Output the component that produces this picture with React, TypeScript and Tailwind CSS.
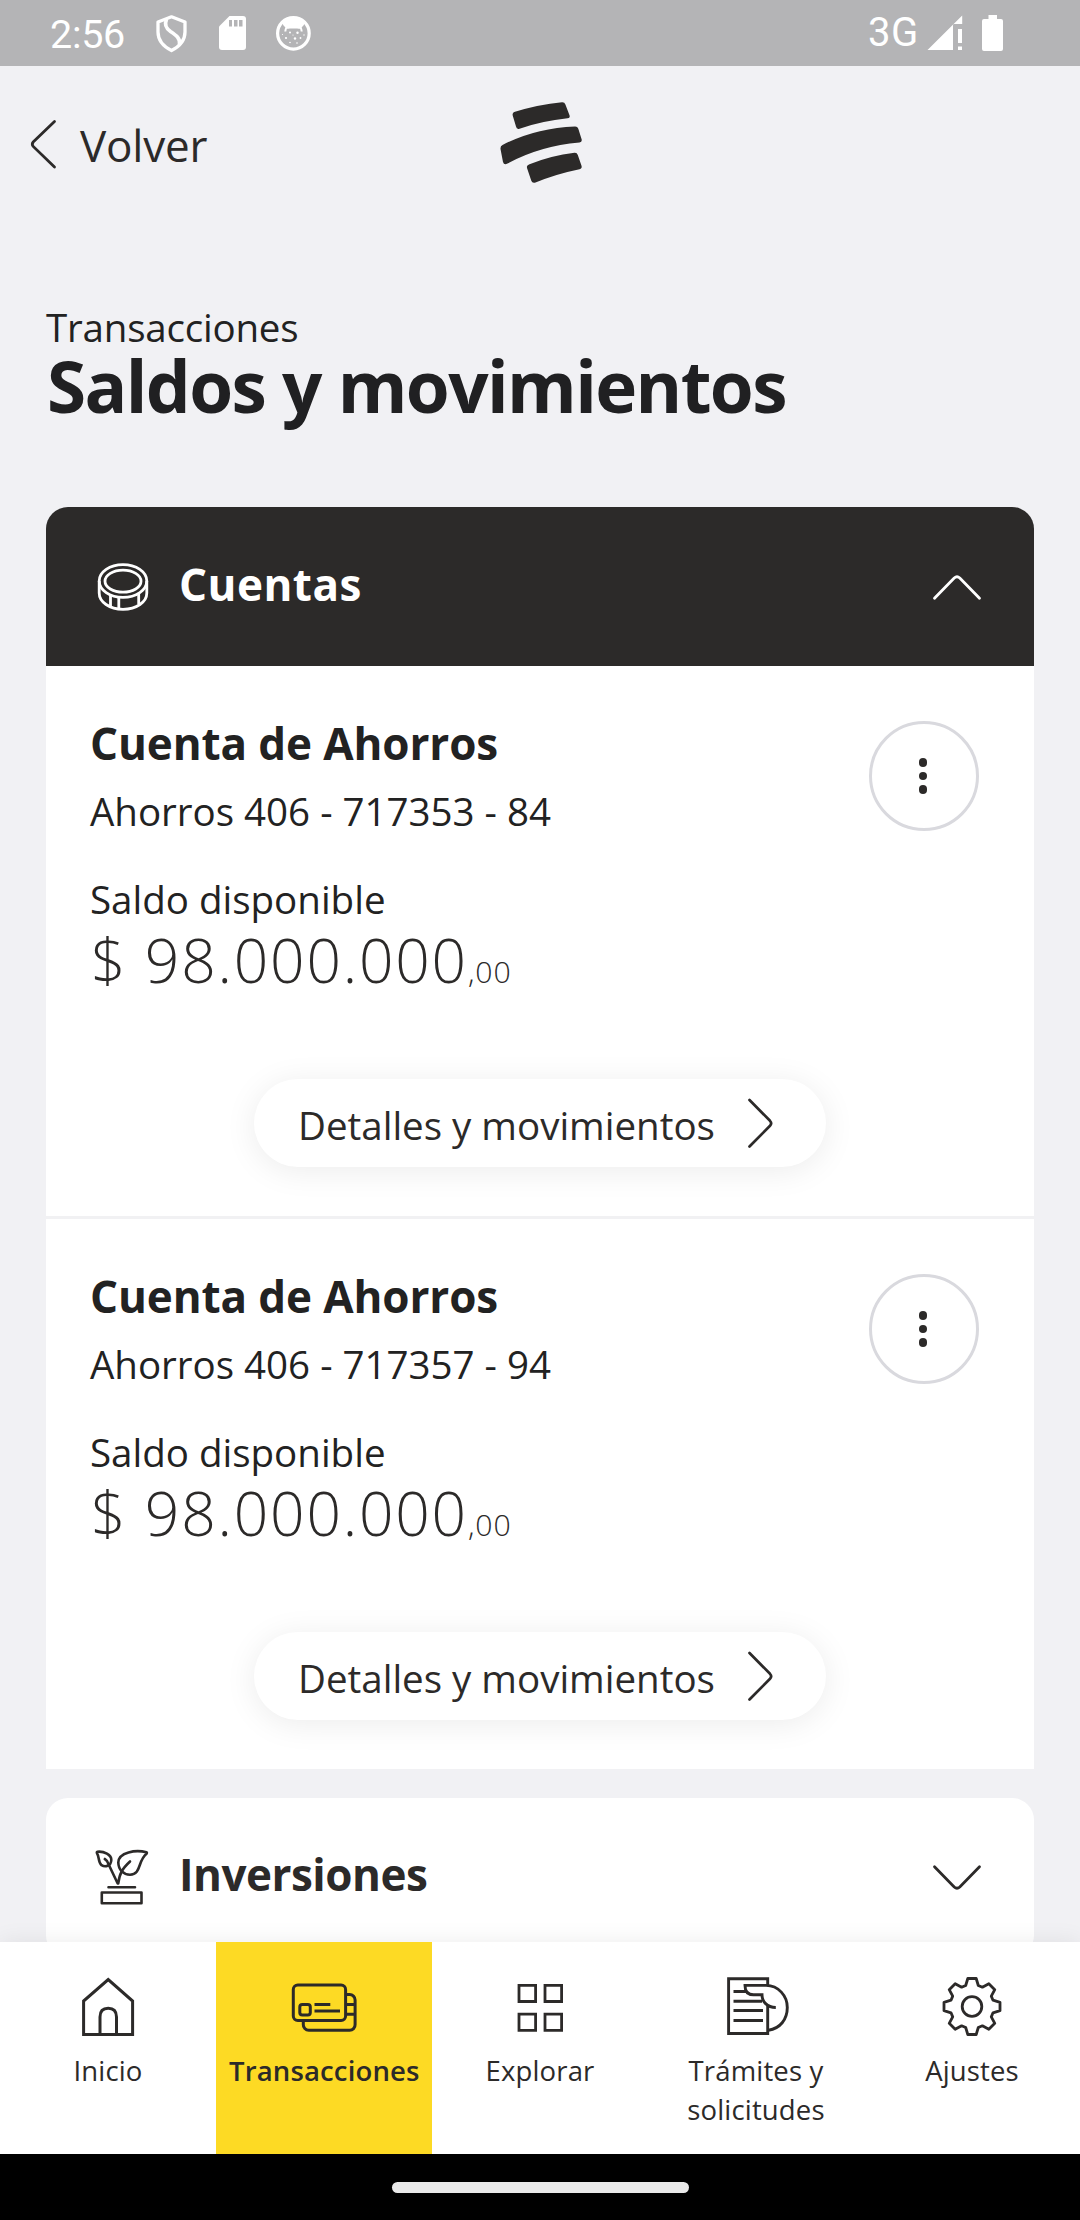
import type { ReactNode } from "react";

const INK = "#2c2a29";

function StatusBar() {
  return (
    <div className="flex h-[66px] shrink-0 items-start bg-[#b4b4b6] text-white">
      <span className="ml-[50px] mt-[11px] w-[76px] font-[Roboto,sans-serif] text-[39.5px] leading-[48px] tracking-[-0.3px]">
        2:56
      </span>
      <svg className="ml-[28px] mt-[12px] h-[42px] w-[34px]" viewBox="154 12 34 42" fill="none" stroke="white" strokeWidth="3.3">
        <path d="M171.5 16.8 L185 22 V32 C185 40 179.5 46.5 171.5 50.5 C163.5 46.500 158 40 158 32 V22 Z" strokeLinejoin="round" />
        <path d="M166.500 19.500 C164.500 24 165.500 28 170.500 31.500 C176.500 35.500 180.500 38.500 179.500 44.500" strokeWidth="3.600" />
      </svg>
      <svg className="ml-[31px] mt-4 h-[35px] w-[27px]" viewBox="219 16 27 35">
        <path d="M229.5 16 H243 A3 3 0 0 1 246 19 V47 A3 3 0 0 1 243 50 H222 A3 3 0 0 1 219 47 V26.5 Z" fill="white" />
        <path d="M229 20 H232 V26.5 H229 Z M234 20 H237.500 V26.500 H234 Z M239 20 H242.500 V26.500 H239 Z" fill="#b4b4b6" />
      </svg>
      <svg className="ml-[29px] mt-[15px] h-[37px] w-[37px]" viewBox="275 15 37 37">
        <circle cx="293.4" cy="33.3" r="15.8" fill="none" stroke="white" strokeWidth="3.2" />
        <path d="M281.500 21.500 C287 16.500 300 16.500 305.300 21.500 L303.500 25.500 L300 28.800 C297 28.300 290 28.300 287 28.800 L283.500 25.500 Z" fill="white" />
        <path d="M283.500 22 L286.500 27.500 Q285.500 29 285.300 31.500 M303.500 22 L300.500 27.500 Q301.500 29 301.700 31.500" fill="none" stroke="white" strokeWidth="2" />
        <g fill="white">
          <circle cx="290" cy="32.500" r="1" /><circle cx="297.500" cy="32.800" r="1.200" />
          <circle cx="286" cy="38" r="1.100" /><circle cx="295" cy="38.500" r="1.200" />
          <circle cx="300.500" cy="38" r="0.900" /><circle cx="290" cy="42.500" r="0.800" />
          <circle cx="297" cy="43" r="0.800" /><circle cx="293" cy="35" r="0.600" />
          <circle cx="304" cy="35" r="0.700" /><circle cx="282.500" cy="34.500" r="0.600" />
        </g>
      </svg>
      <span className="ml-auto mt-[9px] w-[50px] font-[Roboto,sans-serif] text-[40px] leading-[48px] tracking-[0.500px]">
        3G
      </span>
      <svg className="ml-[9px] mt-[15px] h-9 w-[36px]" viewBox="927 15 36 36" fill="white">
        <path d="M927.5 50 L962.200 15.500 V24 H953 V50 Z" />
        <path d="M958 29 H962 V43 H958 Z M958 46.500 H962 V50 H958 Z" />
      </svg>
      <svg className="ml-[18px] mr-[76px] mt-[15px] h-9 w-[23px]" viewBox="981 15 23 36" fill="white">
        <path d="M988.500 15 H997 V19 H1001 A2 2 0 0 1 1003 21 V49 A2 2 0 0 1 1001 51 H984 A2 2 0 0 1 982 49 V21 A2 2 0 0 1 984 19 H988.500 Z" />
      </svg>
    </div>
  );
}

function Header() {
  return (
    <header className="grid h-[158px] shrink-0 grid-cols-3 items-center text-[#2c2a29]">
      <button className="flex items-center text-left">
        <svg className="mb-[3px] ml-7 h-[52px] w-8" viewBox="28 117 32 52" fill="none" stroke={INK} strokeWidth="2.8" strokeLinecap="round">
          <path d="M54.5 120.500 L33.200 141 Q31.400 143.200 33.200 145.400 L54.500 166" />
        </svg>
        <span className="ml-5 text-[44px] leading-[60px] tracking-[-0.2px]">Volver</span>
      </button>
      <svg className="h-[90px] w-[86px] justify-self-center" viewBox="497 100 86 90" fill={INK}>
        <path d="M515 111.800 Q538 104.500 562 102.200 Q564.600 102 565.400 104.500 L569.600 115.500 Q570.300 118 567.500 118.300 Q542 121 519.500 128.700 Q516.600 129.600 516 126.500 L512.700 115.500 Q512 112.700 515 111.800 Z" />
        <path d="M502.500 145 Q535 128 575 126.400 Q577.500 126.300 578.300 128.700 L581.700 139.500 Q582.200 142.300 579.500 142.600 Q540 146 507.500 163.600 Q504 165.500 503 162 L500.600 149.500 Q500 146.200 502.500 145 Z" />
        <path d="M529.500 164.200 Q551 155.500 574.500 152.700 Q577 152.400 577.800 155 L581.600 166 Q582.200 168.600 579.500 169.200 Q556 174 535.500 182.500 Q532.300 183.700 531.300 180.700 L527 168 Q526.300 165.400 529.500 164.200 Z" />
      </svg>
    </header>
  );
}

function CoinIcon() {
  return (
    <svg className="h-[54px] w-[54px]" viewBox="96 560 54 54" fill="none" stroke="white" strokeWidth="2.800">
      <ellipse cx="123" cy="581" rx="23.800" ry="16.400" />
      <ellipse cx="123" cy="581.200" rx="18" ry="11" />
      <path d="M99.200 581 V593 C99.200 602 109.500 609.300 123 609.300 S146.800 602 146.800 593 V581" />
      <path d="M110.500 596 V606 M118.800 598 V608.500 M138.700 594 V604" />
    </svg>
  );
}

function PlantIcon() {
  return (
    <svg className="h-[60px] w-[56px]" viewBox="94 1850 56 60" fill="none" stroke={INK} strokeWidth="2.600" strokeLinecap="round" strokeLinejoin="round">
      <path d="M101.800 1894.500 H141.500 V1905.300 H101.800 Z M108.500 1889.300 H135" />
      <path d="M104.800 1861 L107 1863 L117.700 1885.500 M130 1863.500 C122 1871 119.500 1875.500 118.200 1885.500" />
      <path d="M97.500 1853.700 C104 1853 111.500 1857 111.300 1862 C111 1868.500 105 1869.300 101.500 1867.200 C98 1864.500 99.500 1859 97 1855.200 Q96.500 1854 97.500 1853.700 Z" />
      <path d="M146.500 1854.300 C136 1851.500 118.500 1854 118.300 1864.500 C118.500 1872 123.500 1876.700 130 1876.700 C141.500 1876.500 137.500 1863 146.500 1855.800 Q147.300 1854.600 146.500 1854.300 Z" />
    </svg>
  );
}

function Chevron({ className, color }: { className: string; color: string }) {
  return (
    <svg className={className} viewBox="0 0 50 28" fill="none" stroke={color} strokeWidth="2.800" strokeLinecap="round">
      <path d="M2.500 25.300 L22.200 5 Q25 2.600 27.800 5 L47.500 25.300" />
    </svg>
  );
}

function AccountItem({ number, divider }: { number: string; divider?: boolean }) {
  return (
    <article className={divider ? "h-[553px] border-b-[3px] border-[#f1f1f3] bg-white pt-[53px]" : "h-[550px] bg-white pt-[53px]"}>
      <div className="flex h-[360px] items-start justify-between pl-11 pr-[55px]">
        <div className="whitespace-nowrap">
          <h3 className="text-[44px] leading-[48px] font-bold tracking-[-0.1px] text-[#222]">Cuenta de Ahorros</h3>
          <p className="mt-5 text-[38.5px] leading-[48px]">{number}</p>
          <p className="mt-10 text-[38.5px] leading-[48px]">Saldo disponible</p>
          <p className="mt-[5px] ml-px text-[60.5px] leading-[64px] font-[340] tracking-[1.800px] text-[#2c2a29]">
            $ 98.000.000<span className="text-[30.25px] tracking-[0.900px]">,00</span>
          </p>
        </div>
        <button className="mt-[2px] flex size-[110px] flex-col items-center justify-center gap-[5px] rounded-full border-[3px] border-[#d9d9de] pr-0.5">
          <span className="size-[8.700px] rounded-full bg-[#2c2a29]" />
          <span className="size-[8.700px] rounded-full bg-[#2c2a29]" />
          <span className="size-[8.700px] rounded-full bg-[#2c2a29]" />
        </button>
      </div>
      <button className="mx-auto flex h-[88px] w-[572px] items-center rounded-full bg-white pl-11 text-[#2c2a29] shadow-[0_4px_32px_rgba(0,0,0,0.080)]">
        <span className="mt-[3px] w-[416px] text-left text-[38.5px] leading-[48px] whitespace-nowrap">Detalles y movimientos</span>
        <svg className="ml-8 h-[52px] w-[28px]" viewBox="746 1097 28 52" fill="none" stroke={INK} strokeWidth="2.700" strokeLinecap="round">
          <path d="M749.500 1100 L770 1120.800 Q772.300 1123.300 770 1125.800 L749.500 1146.500" />
        </svg>
      </button>
    </article>
  );
}

function HomeIcon() {
  return (
    <svg className="h-[60px] w-[70px]" viewBox="73 1977 70 60" fill="none" stroke={INK} strokeWidth="3">
      <path d="M83.600 2034.500 V2001 L108.200 1979.500 L132.600 2001 V2034.500 Z" />
      <path d="M100 2034 V2017 Q100 2008.300 108.200 2008.300 T116.500 2017 V2034" />
    </svg>
  );
}

function CardsIcon() {
  return (
    <svg className="h-[60px] w-[70px]" viewBox="289.5 1977 70 60" fill="none" stroke={INK} strokeWidth="3">
      <rect x="293.800" y="1985" width="52.300" height="35.500" rx="4.500" />
      <rect x="300.300" y="2004.500" width="10.500" height="10.500" rx="2.500" />
      <path d="M315 2004.500 H330.800 M315 2011 H340.500" />
      <path d="M303.800 2021 V2024.500 A5.500 5.500 0 0 0 309.300 2030.300 H350 A5.500 5.500 0 0 0 355.600 2024.500 V2000 A5.500 5.500 0 0 0 350 1994.500 H346 M346 2004.500 H355.600 M346 2014.300 H355.600" />
    </svg>
  );
}

function GridIcon() {
  return (
    <svg className="h-[60px] w-[70px]" viewBox="505 1977 70 60" fill="none" stroke={INK} strokeWidth="2.800">
      <path d="M519 1985.300 H535.600 V2001.500 H519 Z M545 1985.300 H561.600 V2001.500 H545 Z M519 2014.200 H535.600 V2030.400 H519 Z M545 2014.200 H561.600 V2030.400 H545 Z" />
    </svg>
  );
}

function PaperIcon() {
  return (
    <svg className="h-[60px] w-[70px]" viewBox="721 1977 70 60" fill="none" stroke={INK} strokeWidth="2.900">
      <path d="M767.700 1985.500 V1978.800 H728.600 V2033.500 H767.700 V2006" />
      <path d="M733.500 1991.500 H746 M733.500 2001.300 H762 M733.500 2010.500 H763 M733.500 2020.500 H763" />
      <path d="M768.500 2030.200 C780 2028.500 787.300 2019.500 787.300 2007.500 C787.300 1996 778.500 1985.400 766 1985.400 H745 C745 1991.500 748 1994.700 753.500 1994.700 H762 C762 2001.500 767 2007.500 775.800 2007.500" />
    </svg>
  );
}

const GEAR_POINTS = Array.from({ length: 8 }, (_, i) => (i * Math.PI) / 4)
  .flatMap((a) =>
    [[-6.300, -21], [-4.200, -28], [4.200, -28], [6.300, -21]].map(
      ([x, y]) => `${(x * Math.cos(a) - y * Math.sin(a)).toFixed(2)},${(x * Math.sin(a) + y * Math.cos(a)).toFixed(2)}`,
    ),
  )
  .join(" ");

function GearIcon() {
  return (
    <svg className="h-[60px] w-[70px]" viewBox="-35 -29.5 70 60" fill="none" stroke={INK} strokeWidth="2.800" strokeLinejoin="round">
      <polygon points={GEAR_POINTS} />
      <circle r="9.800" />
    </svg>
  );
}

function NavItem({ icon, label, active }: { icon: ReactNode; label: string; active?: boolean }) {
  return (
    <button className={active ? "flex flex-col items-center bg-[#fdda24] pt-[35px] font-semibold" : "flex flex-col items-center pt-[35px]"}>
      {icon}
      <span className="mt-3.5 w-[190px] text-center text-[27.5px] leading-[39px] tracking-[0.15px]">{label}</span>
    </button>
  );
}

export default function App() {
  return (
    <div className="flex h-[2220px] w-[1080px] flex-col overflow-hidden bg-[#f1f1f4] font-['Open_Sans',sans-serif] text-[#222]">
      <StatusBar />
      <Header />
      <main className="min-h-0 flex-1 overflow-hidden px-[46px] pt-[79px]">
        <p className="text-[38.5px] leading-[48px] tracking-[-0.2px]">Transacciones</p>
        <h1 className="ml-px text-[71px] leading-[70px] font-bold tracking-[-1.600px] whitespace-nowrap text-[#202022]">
          Saldos y movimientos
        </h1>
        <section className="mt-[86px]">
          <div className="flex h-[159px] items-center rounded-t-[22px] bg-[#2c2a29] pl-[50px] pr-[52px] text-white">
            <CoinIcon />
            <h2 className="mb-[5px] ml-[29px] text-[44px] leading-[60px] font-bold tracking-[0.500px]">Cuentas</h2>
            <Chevron className="ml-auto h-[28px] w-[50px]" color="white" />
          </div>
          <AccountItem number="Ahorros 406 - 717353 - 84" divider />
          <AccountItem number="Ahorros 406 - 717357 - 94" />
        </section>
        <section className="mt-[29px] flex h-[159px] items-center rounded-[22px] bg-white pl-12 pr-[52px] text-[#2c2a29]">
          <PlantIcon />
          <h2 className="mb-[7px] ml-[29px] text-[44px] leading-[60px] font-bold tracking-[-0.500px]">Inversiones</h2>
          <Chevron className="ml-auto h-[28px] w-[50px] rotate-180" color={INK} />
        </section>
      </main>
      <nav className="z-10 grid h-[212px] shrink-0 grid-cols-5 bg-white text-[#2c2a29] shadow-[0_0_22px_rgba(0,0,0,0.080)]">
        <NavItem icon={<HomeIcon />} label="Inicio" />
        <NavItem icon={<CardsIcon />} label="Transacciones" active />
        <NavItem icon={<GridIcon />} label="Explorar" />
        <NavItem icon={<PaperIcon />} label="Trámites y solicitudes" />
        <NavItem icon={<GearIcon />} label="Ajustes" />
      </nav>
      <div className="z-20 flex h-[66px] shrink-0 items-center justify-center bg-black">
        <div className="h-[11px] w-[297px] rounded-full bg-[#eaeaea]" />
      </div>
    </div>
  );
}
